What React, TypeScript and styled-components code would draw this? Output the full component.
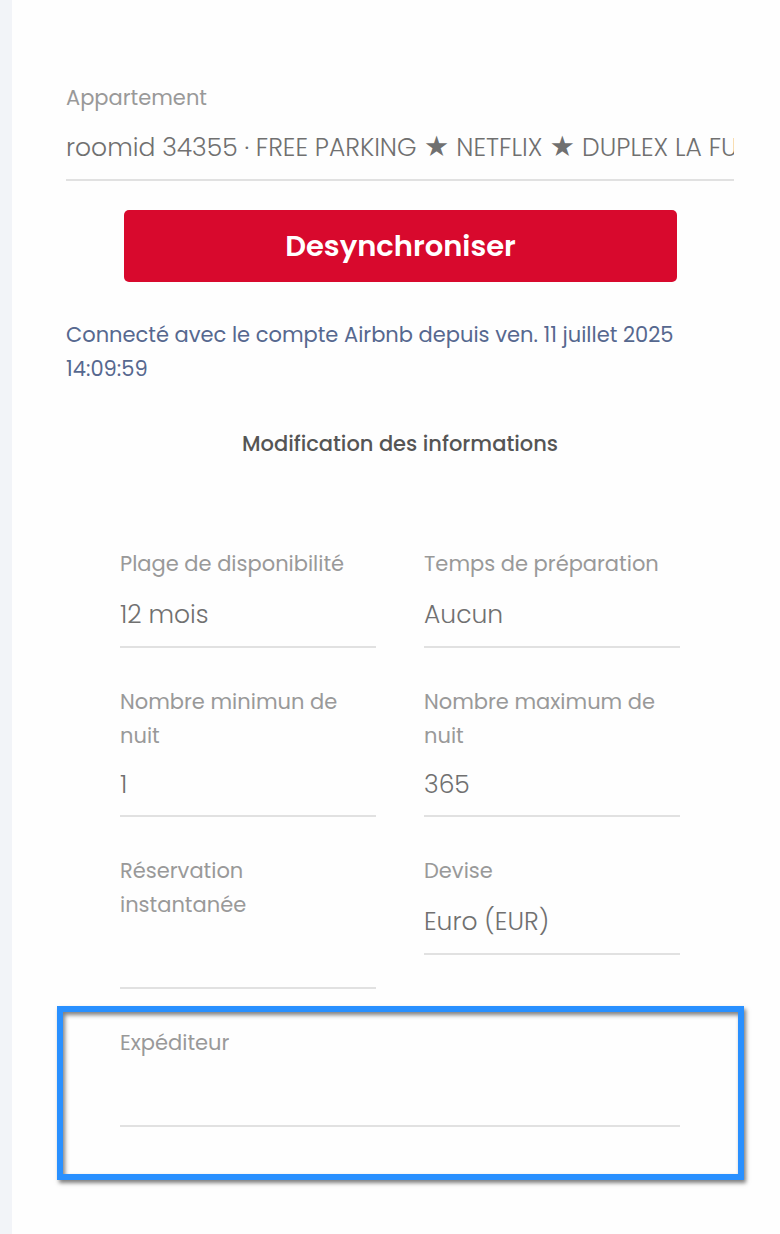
import React, { useState } from "react";
import styled, { createGlobalStyle } from "styled-components";

const GlobalStyle = createGlobalStyle`
  *, *::before, *::after { box-sizing: border-box; }
  body {
    margin: 0;
    background: #f2f4f8;
    color: #999999;
    font-family: Poppins, Inter, "DejaVu Sans", sans-serif;
    font-size: 21px;
    line-height: 34px;
  }
`;

const Panel = styled.main`
  min-height: 100vh;
  margin-left: 12px;
  padding: 81px 46px 54px 54px;
  background: #fefefe;
`;

const Field = styled.div`
  display: flex;
  flex-direction: column;
  min-width: 0;
`;

const Label = styled.label`
  color: #999999;
`;

const TextInput = styled.input<{ $height: number }>`
  width: 100%;
  height: ${(p) => p.$height}px;
  padding: 2px 0 0;
  border: 0;
  border-bottom: 2px solid #e1e1e1;
  border-radius: 0;
  outline: none;
  background: transparent;
  color: #707070;
  font: inherit;
  font-size: 25px;
  font-weight: 300;
`;

const Select = styled.select`
  appearance: none;
  width: 100%;
  height: 67px;
  padding: 2px 0 0;
  border: 0;
  border-bottom: 2px solid #e1e1e1;
  border-radius: 0;
  outline: none;
  background: transparent;
  color: #707070;
  font: inherit;
  font-size: 25px;
  font-weight: 300;
`;

const UnsyncButton = styled.button`
  display: block;
  width: calc(100% - 115px);
  height: 72px;
  margin: 29px 57px 36px 58px;
  border: 0;
  border-radius: 5px;
  background: #d8092d;
  color: #ffffff;
  font: inherit;
  font-size: 29px;
  font-weight: 600;
  cursor: pointer;
`;

const Status = styled.p`
  margin: 0;
  color: #56688f;
`;

const Heading = styled.h2`
  margin: 41px 0 86px;
  color: #555555;
  font-size: 21px;
  font-weight: 500;
  text-align: center;
`;

const FieldGrid = styled.div`
  display: grid;
  grid-template-columns: 1fr 1fr;
  align-items: start;
  gap: 37px 48px;
  padding: 0 54px;
`;

const Highlight = styled.section`
  margin: 17px -10px 0 -9px;
  padding: 14px 58px 47px 57px;
  border: 6px solid #2990ff;
  box-shadow: 2px 3px 4px rgba(0, 0, 0, 0.5), inset 2px 3px 4px rgba(0, 0, 0, 0.5);
`;

type FieldProps = { id: string; label: React.ReactNode };

function SelectField({ id, label, options }: FieldProps & { options: string[] }) {
  return (
    <Field>
      <Label htmlFor={id}>{label}</Label>
      <Select id={id} defaultValue={options[0]}>
        {options.map((o) => (
          <option key={o} value={o}>{o}</option>
        ))}
      </Select>
    </Field>
  );
}

function InputField({ id, label, initial, height = 64 }: FieldProps & { initial: string; height?: number }) {
  const [value, setValue] = useState(initial);
  return (
    <Field>
      <Label htmlFor={id}>{label}</Label>
      <TextInput id={id} type="text" $height={height} value={value} onChange={(e) => setValue(e.target.value)} />
    </Field>
  );
}

export default function App() {
  return (
    <>
      <GlobalStyle />
      <Panel>
        <InputField
          id="apartment"
          label="Appartement"
          height={66}
          initial="roomid 34355 · FREE PARKING ★ NETFLIX ★ DUPLEX LA FU"
        />
        <UnsyncButton type="button">Desynchroniser</UnsyncButton>
        <Status>Connecté avec le compte Airbnb depuis ven. 11 juillet 2025 14:09:59</Status>
        <Heading>Modification des informations</Heading>
        <FieldGrid>
          <SelectField id="availability" label="Plage de disponibilité" options={["12 mois"]} />
          <SelectField id="preparation" label="Temps de préparation" options={["Aucun"]} />
          <InputField id="min-nights" label="Nombre minimun de nuit" initial="1" />
          <InputField id="max-nights" label="Nombre maximum de nuit" initial="365" />
          <SelectField id="instant" label={<>Réservation<br />instantanée</>} options={[""]} />
          <SelectField id="currency" label="Devise" options={["Euro (EUR)"]} />
        </FieldGrid>
        <Highlight>
          <SelectField id="sender" label="Expéditeur" options={[""]} />
        </Highlight>
      </Panel>
    </>
  );
}
